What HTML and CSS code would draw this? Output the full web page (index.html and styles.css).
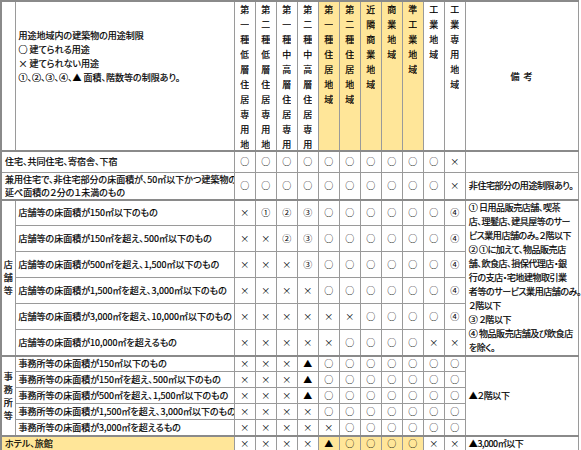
FILE: index.html
```html
<!DOCTYPE html>
<html lang="ja">
<head>
<meta charset="utf-8">
<link rel="stylesheet" href="styles.css">
</head>
<body>
<table class="grid">
  <colgroup>
    <col class="c-group">
    <col class="c-text">
    <col class="c-mark"><col class="c-mark"><col class="c-mark"><col class="c-mark">
    <col class="c-mark"><col class="c-mark"><col class="c-mark"><col class="c-mark">
    <col class="c-mark"><col class="c-mark"><col class="c-mark">
    <col class="c-note">
  </colgroup>
  <thead>
    <tr class="r-head">
      <th class="blank"></th>
      <th class="legend">
        <div class="legend-box">
          用途地域内の建築物の用途制限<br>
          ○ 建てられる用途<br>
          × 建てられない用途<br>
          ①、②、③、④、▲ 面積、階数等の制限あり。
        </div>
      </th>
      <th class="zone"><div class="vt">第一種低層住居専用地域</div></th>
      <th class="zone"><div class="vt">第二種低層住居専用地域</div></th>
      <th class="zone"><div class="vt">第一種中高層住居専用地域</div></th>
      <th class="zone"><div class="vt">第二種中高層住居専用地域</div></th>
      <th class="zone hl"><div class="vt">第一種住居地域</div></th>
      <th class="zone hl"><div class="vt">第二種住居地域</div></th>
      <th class="zone hl"><div class="vt">近隣商業地域</div></th>
      <th class="zone hl"><div class="vt">商業地域</div></th>
      <th class="zone hl"><div class="vt">準工業地域</div></th>
      <th class="zone"><div class="vt">工業地域</div></th>
      <th class="zone"><div class="vt">工業専用地域</div></th>
      <th class="note-head">備 考</th>
    </tr>
  </thead>
  <tbody>
    <tr class="r-single sep-top">
      <td class="label" colspan="2">住宅、共同住宅、寄宿舎、下宿</td>
      <td class="m">○</td><td class="m">○</td><td class="m">○</td><td class="m">○</td>
      <td class="m">○</td><td class="m">○</td><td class="m">○</td><td class="m">○</td>
      <td class="m">○</td><td class="m">○</td><td class="m">×</td>
      <td class="note"></td>
    </tr>
    <tr class="r-double">
      <td class="label" colspan="2">兼用住宅で、非住宅部分の床面積が、50㎡以下かつ建築物の<br>延べ面積の２分の１未満のもの</td>
      <td class="m">○</td><td class="m">○</td><td class="m">○</td><td class="m">○</td>
      <td class="m">○</td><td class="m">○</td><td class="m">○</td><td class="m">○</td>
      <td class="m">○</td><td class="m">○</td><td class="m">×</td>
      <td class="note mid">非住宅部分の用途制限あり。</td>
    </tr>

    <tr class="r-shop sep-top">
      <td class="group" rowspan="6"><div class="vg">店舗等</div></td>
      <td class="sub">店舗等の床面積が150㎡以下のもの</td>
      <td class="m">×</td><td class="m">①</td><td class="m">②</td><td class="m">③</td>
      <td class="m">○</td><td class="m">○</td><td class="m">○</td><td class="m">○</td>
      <td class="m">○</td><td class="m">○</td><td class="m">④</td>
      <td class="note top" rowspan="6">① 日用品販売店舗、喫茶<br>店、理髪店、建具屋等のサー<br>ビス業用店舗のみ。２階以下<br>② ①に加えて、物品販売店<br>舗、飲食店、損保代理店・銀<br>行の支店・宅地建物取引業<br>者等のサービス業用店舗のみ。<br>２階以下<br>③ ２階以下<br>④ 物品販売店舗及び飲食店<br>を除く。</td>
    </tr>
    <tr class="r-shop">
      <td class="sub">店舗等の床面積が150㎡を超え、500㎡以下のもの</td>
      <td class="m">×</td><td class="m">×</td><td class="m">②</td><td class="m">③</td>
      <td class="m">○</td><td class="m">○</td><td class="m">○</td><td class="m">○</td>
      <td class="m">○</td><td class="m">○</td><td class="m">④</td>
    </tr>
    <tr class="r-shop">
      <td class="sub">店舗等の床面積が500㎡を超え、1,500㎡以下のもの</td>
      <td class="m">×</td><td class="m">×</td><td class="m">×</td><td class="m">③</td>
      <td class="m">○</td><td class="m">○</td><td class="m">○</td><td class="m">○</td>
      <td class="m">○</td><td class="m">○</td><td class="m">④</td>
    </tr>
    <tr class="r-shop">
      <td class="sub">店舗等の床面積が1,500㎡を超え、3,000㎡以下のもの</td>
      <td class="m">×</td><td class="m">×</td><td class="m">×</td><td class="m">×</td>
      <td class="m">○</td><td class="m">○</td><td class="m">○</td><td class="m">○</td>
      <td class="m">○</td><td class="m">○</td><td class="m">④</td>
    </tr>
    <tr class="r-shop">
      <td class="sub">店舗等の床面積が3,000㎡を超え、10,000㎡以下のもの</td>
      <td class="m">×</td><td class="m">×</td><td class="m">×</td><td class="m">×</td>
      <td class="m">×</td><td class="m">×</td><td class="m">○</td><td class="m">○</td>
      <td class="m">○</td><td class="m">○</td><td class="m">④</td>
    </tr>
    <tr class="r-shop">
      <td class="sub">店舗等の床面積が10,000㎡を超えるもの</td>
      <td class="m">×</td><td class="m">×</td><td class="m">×</td><td class="m">×</td>
      <td class="m">×</td><td class="m">○</td><td class="m">○</td><td class="m">○</td>
      <td class="m">○</td><td class="m">×</td><td class="m">×</td>
    </tr>

    <tr class="r-office sep-top">
      <td class="group" rowspan="5"><div class="vg">事務所等</div></td>
      <td class="sub">事務所等の床面積が150㎡以下のもの</td>
      <td class="m">×</td><td class="m">×</td><td class="m">×</td><td class="m">▲</td>
      <td class="m">○</td><td class="m">○</td><td class="m">○</td><td class="m">○</td>
      <td class="m">○</td><td class="m">○</td><td class="m">○</td>
      <td class="note mid" rowspan="5">▲２階以下</td>
    </tr>
    <tr class="r-office">
      <td class="sub">事務所等の床面積が150㎡を超え、500㎡以下のもの</td>
      <td class="m">×</td><td class="m">×</td><td class="m">×</td><td class="m">▲</td>
      <td class="m">○</td><td class="m">○</td><td class="m">○</td><td class="m">○</td>
      <td class="m">○</td><td class="m">○</td><td class="m">○</td>
    </tr>
    <tr class="r-office">
      <td class="sub">事務所等の床面積が500㎡を超え、1,500㎡以下のもの</td>
      <td class="m">×</td><td class="m">×</td><td class="m">×</td><td class="m">▲</td>
      <td class="m">○</td><td class="m">○</td><td class="m">○</td><td class="m">○</td>
      <td class="m">○</td><td class="m">○</td><td class="m">○</td>
    </tr>
    <tr class="r-office">
      <td class="sub">事務所等の床面積が1,500㎡を超え、3,000㎡以下のもの</td>
      <td class="m">×</td><td class="m">×</td><td class="m">×</td><td class="m">×</td>
      <td class="m">○</td><td class="m">○</td><td class="m">○</td><td class="m">○</td>
      <td class="m">○</td><td class="m">○</td><td class="m">○</td>
    </tr>
    <tr class="r-office">
      <td class="sub">事務所等の床面積が3,000㎡を超えるもの</td>
      <td class="m">×</td><td class="m">×</td><td class="m">×</td><td class="m">×</td>
      <td class="m">×</td><td class="m">○</td><td class="m">○</td><td class="m">○</td>
      <td class="m">○</td><td class="m">○</td><td class="m">○</td>
    </tr>

    <tr class="r-office sep-top">
      <td class="label hl" colspan="2">ホテル、旅館</td>
      <td class="m">×</td><td class="m">×</td><td class="m">×</td><td class="m">×</td>
      <td class="m hl">▲</td><td class="m hl">○</td><td class="m hl">○</td><td class="m hl">○</td>
      <td class="m hl">○</td><td class="m">×</td><td class="m">×</td>
      <td class="note">▲3,000㎡以下</td>
    </tr>
  </tbody>
</table>
</body>
</html>
```

FILE: styles.css
```css
html, body {
  margin: 0;
  padding: 0;
  background: #ffffff;
}

body {
  font-family: "Noto Sans CJK JP", "Noto Sans", sans-serif;
  font-size: 9px;
  color: #000000;
  font-feature-settings: "palt";
  -webkit-text-stroke: 0.2px #000000;
}

.grid {
  border-collapse: collapse;
  table-layout: fixed;
  width: 579px;
  border-top: 2px solid #8a8a8a;
  border-left: 2px solid #8a8a8a;
}

.c-group { width: 14px; }
.c-text { width: 219px; }
.c-mark { width: 21px; }
.c-note { width: 113px; }

.grid th,
.grid td {
  border: 1px solid #9a9a9a;
  padding: 0;
  font-weight: normal;
  vertical-align: middle;
  white-space: nowrap;
  overflow: hidden;
}

.grid .sep-top > td {
  border-top: 2px solid #8a8a8a;
}

.r-head { height: 148px; }
.r-single { height: 21px; }
.r-double { height: 24px; }
.r-shop { height: 25.6px; }
.r-office { height: 16px; }

.grid .legend {
  text-align: left;
  vertical-align: top;
}

.legend-box {
  padding: 27px 0 0 3px;
  line-height: 14px;
}

.grid .zone {
  vertical-align: top;
}

.vt {
  width: 1em;
  height: 148px;
  margin: 0 auto;
  line-height: 15px;
  white-space: normal;
  word-break: break-all;
  overflow: hidden;
  text-align: center;
}

.grid .hl {
  background: #ffe699;
}

.note-head {
  text-align: center;
  letter-spacing: 1px;
}

.grid .label {
  text-align: left;
  padding-left: 3px;
  line-height: 13px;
}

.grid .sub {
  text-align: left;
  padding-left: 3px;
}

.vg {
  width: 1em;
  margin: 0 auto;
  line-height: 13px;
  white-space: normal;
  word-break: break-all;
  text-align: center;
}

.grid .m {
  text-align: center;
  font-feature-settings: normal;
  -webkit-text-stroke: 0;
}

.grid .note {
  text-align: left;
  padding-left: 3px;
  line-height: 14px;
  letter-spacing: -0.45px;
  overflow: visible;
}

.grid .note.top {
  vertical-align: top;
}
```
